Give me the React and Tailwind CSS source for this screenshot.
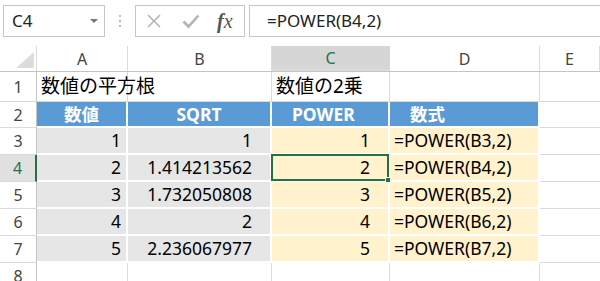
import React from 'react';

const font = { fontFamily: '"Noto Sans", "Noto Sans CJK JP", sans-serif' };

const cols = ['A', 'B', 'C', 'D', 'E'];

const rows = [
  { n: 1, h: 'h-[30px]' },
  { n: 2, h: 'h-[26px]' },
  { n: 3, h: 'h-[27px]' },
  { n: 4, h: 'h-[27px]' },
  { n: 5, h: 'h-[27px]' },
  { n: 6, h: 'h-[27px]' },
  { n: 7, h: 'h-[27px]' },
  { n: 8, h: 'h-[27px]' },
];

const data = {
  3: ['1', '1', '1', '=POWER(B3,2)'],
  4: ['2', '1.414213562', '2', '=POWER(B4,2)'],
  5: ['3', '1.732050808', '3', '=POWER(B5,2)'],
  6: ['4', '2', '4', '=POWER(B6,2)'],
  7: ['5', '2.236067977', '5', '=POWER(B7,2)'],
};

const Toolbar = () => (
  <div className="flex items-center h-[42px] pt-[5px] pb-[5px] bg-white">
    <div className="ml-[3px] w-[102px] h-[32px] border border-[#c6c6c6] flex items-center justify-between pl-[8px] pr-[6px]">
      <span className="text-[17px] text-[#222]">C4</span>
      <svg width="8" height="5" viewBox="0 0 8 5"><path d="M0 0h8L4 4z" fill="#777" /></svg>
    </div>
    <div className="w-[30px] flex flex-col items-center gap-[3px]">
      <span className="w-[2px] h-[2px] bg-[#bbb]" />
      <span className="w-[2px] h-[2px] bg-[#bbb]" />
      <span className="w-[2px] h-[2px] bg-[#bbb]" />
    </div>
    <div className="w-[110px] h-[32px] border border-[#c6c6c6] flex items-center">
      <svg className="ml-[10px]" width="16" height="16" viewBox="0 0 16 16">
        <path d="M2 2l12 12M14 2L2 14" stroke="#b4b4b4" strokeWidth="1.6" />
      </svg>
      <svg className="ml-[20px]" width="18" height="16" viewBox="0 0 18 16">
        <path d="M1.5 8.5l5 5L16.5 2.5" stroke="#b4b4b4" strokeWidth="2.6" fill="none" />
      </svg>
      <span className="ml-[17px] text-[20px] italic text-[#555] leading-none" style={{ fontFamily: '"Liberation Serif", serif' }}>
        <span className="font-bold">f</span>x
      </span>
    </div>
    <div className="ml-[4px] flex-1 h-[32px] border border-[#c6c6c6] border-r-0 flex items-center pl-[17px]">
      <span className="text-[17px] text-[#222]">=POWER(B4,2)</span>
    </div>
  </div>
);

const HeaderRow = () => (
  <div className="flex h-[26px] mt-[4px] border-b border-[#c4c4c4] text-[16px] text-[#444]">
    <div className="w-[37px] border-r border-[#dadada] flex items-end justify-end pr-[2px] pb-[3px]">
      <svg width="18" height="16" viewBox="0 0 18 16"><path d="M18 0v16H0z" fill="#dcdcdc" /></svg>
    </div>
    {cols.map((c, i) => (
      <div
        key={c}
        className={`${['w-[91px]', 'w-[144px]', 'w-[118px]', 'w-[150px]', 'flex-1'][i]} ${c === 'C' ? 'bg-[#d6d6d6] text-[#217346] border-b-2 border-[#217346]' : ''} border-r border-[#dadada] flex items-center justify-center`}
      >
        {c}
      </div>
    ))}
  </div>
);

const widths = ['w-[91px]', 'w-[144px]', 'w-[118px]', 'w-[150px]'];

const Cell = ({ row, col, children }) => {
  const base = `${widths[col]} h-full flex items-center text-[17.5px] text-black shrink-0`;
  if (row === 1) {
    return <div className={`${base} text-[19px] border-r border-b border-[#dadada] whitespace-nowrap pl-[4px]`}>{children}</div>;
  }
  if (row === 2) {
    const align = col < 2 ? 'justify-center' : 'pl-[20px]';
    return <div className={`${base} ${align} bg-[#5b9bd5] text-white font-bold text-[15px] border-r-2 border-b-2 border-white`}>{children}</div>;
  }
  if (row >= 3 && row <= 7) {
    const fill = col < 2 ? 'bg-[#e7e6e6]' : 'bg-[#fff2cc]';
    const align = ['justify-end pr-[5px]', 'justify-end pr-[18px]', 'justify-end pr-[18px]', 'pl-[4px]'][col];
    const sel = row === 4 && col === 2;
    return (
      <div className={`${base} ${fill} ${align} border-r-2 border-b-2 border-white relative`}>
        {children}
        {sel && (
          <div className="absolute -left-[1px] -top-[1px] -right-[1px] -bottom-[1px] border-2 border-[#217346]">
            <div className="absolute -right-[4px] -bottom-[4px] w-[6px] h-[6px] bg-[#217346] border border-white" />
          </div>
        )}
      </div>
    );
  }
  return <div className={`${base} border-r border-b border-[#dadada]`} />;
};

const App = () => (
  <div className="w-[600px] h-[281px] overflow-hidden bg-white" style={font}>
    <Toolbar />
    <HeaderRow />
    {rows.map(({ n, h }) => (
      <div key={n} className={`flex ${h}`}>
        <div
          className={`w-[37px] shrink-0 flex items-center justify-center text-[16px] border-b border-[#dadada] ${n === 4 ? 'bg-[#e1e1e1] text-[#217346] border-r-2 border-r-[#217346]' : 'text-[#444] border-r border-r-[#c4c4c4]'}`}
        >
          {n}
        </div>
        {[0, 1, 2, 3].map((c) => {
          let content = null;
          if (n === 1 && c === 0) content = '数値の平方根';
          if (n === 1 && c === 2) content = '数値の2乗';
          if (n === 2) content = ['数値', 'SQRT', 'POWER', '数式'][c];
          if (data[n]) content = data[n][c];
          return (
            <Cell key={c} row={n} col={c}>
              {content}
            </Cell>
          );
        })}
        <div className="flex-1 border-b border-[#dadada]" />
      </div>
    ))}
  </div>
);

export default App;
